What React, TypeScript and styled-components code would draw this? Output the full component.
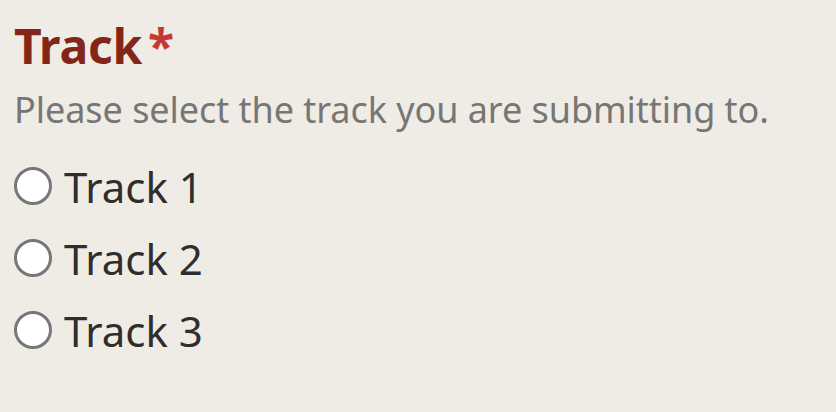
import React from "react";
import styled, { createGlobalStyle } from "styled-components";

const Global = createGlobalStyle`
  html, body { margin: 0; padding: 0; background: #efece6; }
  body { font-family: "Noto Sans", "Open Sans", sans-serif; }
`;

const Page = styled.div`
  width: 836px;
  height: 412px;
  background: #efece6;
  box-sizing: border-box;
  padding: 14px 14px 0 14px;
`;

const Title = styled.h2`
  margin: 0;
  font-size: 48px;
  font-weight: 700;
  color: #832519;
  line-height: 64px;
  letter-spacing: -0.2px;
`;

const Star = styled.span`
  color: #c53a33;
  margin-left: 6px;
  font-weight: 700;
`;

const Help = styled.p`
  margin: 8px 0 16px;
  font-size: 36px;
  color: #777674;
  line-height: 48px;
  letter-spacing: -0.05px;
`;

const List = styled.div`
  display: flex;
  flex-direction: column;
`;

const Option = styled.label`
  display: flex;
  align-items: center;
  gap: 12px;
  height: 72px;
  font-size: 42px;
  color: #2f2e2c;
`;

const Radio = styled.span`
  width: 38px;
  height: 38px;
  box-sizing: border-box;
  border-radius: 50%;
  border: 3px solid #777777;
  background: #ffffff;
  flex: none;
`;

export default function App() {
  return (
    <Page>
      <Global />
      <Title>
        Track<Star>*</Star>
      </Title>
      <Help>Please select the track you are submitting to.</Help>
      <List>
        {["Track 1", "Track 2", "Track 3"].map((t) => (
          <Option key={t}>
            <Radio />
            {t}
          </Option>
        ))}
      </List>
    </Page>
  );
}
